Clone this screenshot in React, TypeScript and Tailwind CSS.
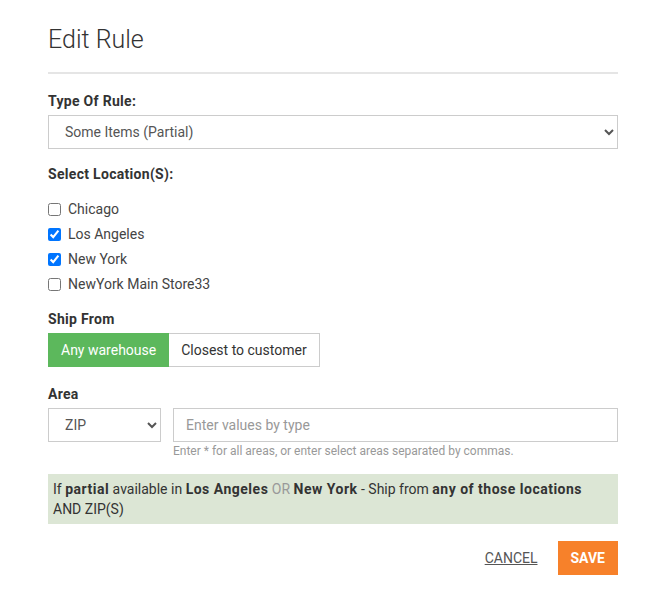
import React from "react";

const locations = [
  { name: "Chicago", checked: false },
  { name: "Los Angeles", checked: true },
  { name: "New York", checked: true },
  { name: "NewYork Main Store33", checked: false },
];

const Label = ({ children }: { children: React.ReactNode }) => (
  <p className="text-[14px] font-bold tracking-[0.3px] text-[#333] leading-[18px]">{children}</p>
);

const B = ({ children }: { children: React.ReactNode }) => (
  <b className="tracking-[0.5px]">{children}</b>
);

const EditRule = () => {
  return (
    <div className="w-[667px] h-[601px] bg-white pl-12 pr-[49px] pt-[26px] font-['Roboto',sans-serif] text-[#333]">
      <h2 className="text-[25px] leading-[28px] font-light text-[#333]">Edit Rule</h2>
      <hr className="mt-[18px] border-t-2 border-[#e5e5e5]" />

      <div className="mt-[18px]">
        <Label>Type Of Rule:</Label>
        <select
          defaultValue="partial"
          className="mt-[5px] w-full h-[34px] border border-[#ccc] pl-[12px] pr-2 text-[14px] text-[#555]"
        >
          <option value="all">All Items</option>
          <option value="partial">Some Items (Partial)</option>
        </select>
      </div>

      <div className="mt-[16px]">
        <Label>Select Location(S):</Label>
        <div className="mt-[17px] flex flex-col gap-[7px]">
          {locations.map((l) => (
            <label key={l.name} className="flex items-center gap-[7px] h-[18px] text-[14px] text-[#444]">
              <input type="checkbox" defaultChecked={l.checked} className="w-[13px] h-[13px] m-0" />
              {l.name}
            </label>
          ))}
        </div>
      </div>

      <div className="mt-[17px]">
        <Label>Ship From</Label>
        <div className="mt-[5px] flex">
          <button className="h-[34px] px-[12px] bg-[#5cb85c] border border-[#5cb85c] text-white text-[14px]">
            Any warehouse
          </button>
          <button className="h-[34px] px-[12px] bg-white border border-[#ccc] border-l-0 text-[#333] text-[14px]">
            Closest to customer
          </button>
        </div>
      </div>

      <div className="mt-[18px]">
        <Label>Area</Label>
        <div className="mt-[5px] flex gap-[12px]">
          <select
            defaultValue="zip"
            className="w-[113px] h-[34px] border border-[#ccc] pl-[12px] pr-1 text-[14px] text-[#555]"
          >
            <option value="zip">ZIP</option>
            <option value="state">State</option>
          </select>
          <div className="flex-1">
            <input
              placeholder="Enter values by type"
              className="w-full h-[34px] border border-[#ccc] px-[12px] text-[14px] placeholder:text-[#999]"
            />
            <p className="mt-[1px] text-[12px] leading-[16px] text-[#999]">
              Enter * for all areas, or enter select areas separated by commas.
            </p>
          </div>
        </div>
      </div>

      <div className="mt-[15px] bg-[#dce6d5] pl-[5px] pr-[8px] py-[5px] text-[14px] leading-[20px] text-[#333]">
        If <B>partial</B> available in <B>Los Angeles</B> <span className="text-[#999]">OR</span>{" "}
        <B>New York</B> - Ship from <B>any of those locations</B> AND ZIP(S)
      </div>

      <div className="mt-[17px] flex justify-end items-center gap-[20px]">
        <button className="text-[14px] text-[#555] underline">CANCEL</button>
        <button className="h-[34px] px-[13px] bg-[#f7812a] text-white text-[14px] font-bold">SAVE</button>
      </div>
    </div>
  );
};

export default function App() {
  return <EditRule />;
}
